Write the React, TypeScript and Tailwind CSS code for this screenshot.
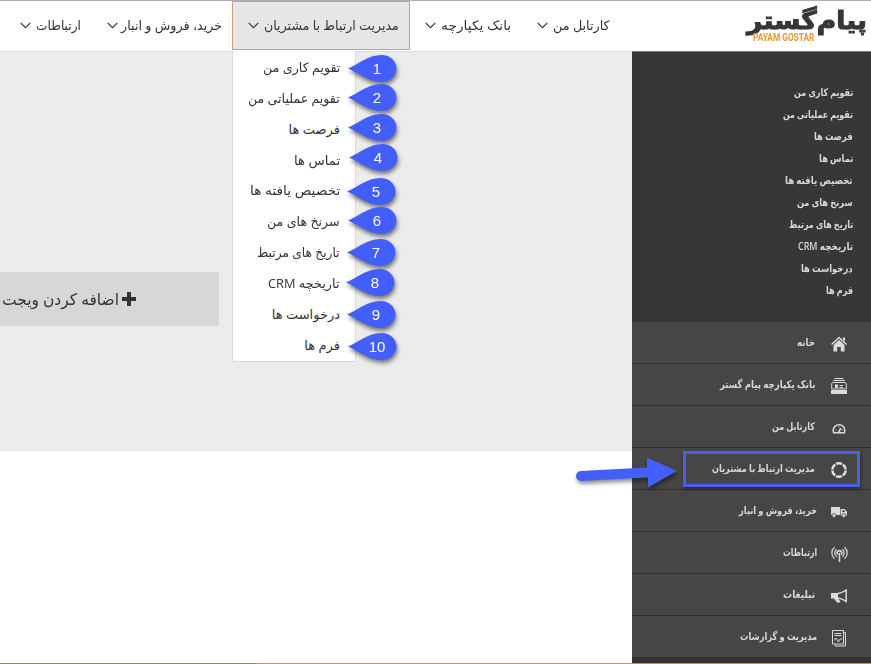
import React, { useLayoutEffect, useRef, useState } from "react";

/* A single line of text whose glyphs are condensed or stretched to the given width. */
function Fit({ w, children, className = "" }: { w: number; children: React.ReactNode; className?: string }) {
  const ref = useRef<HTMLSpanElement>(null);
  const [scale, setScale] = useState(1);
  useLayoutEffect(() => {
    if (ref.current) setScale(w / ref.current.offsetWidth);
  }, [w]);
  return (
    <span dir="rtl" className={"block shrink-0 whitespace-nowrap " + className} style={{ width: w }}>
      <span ref={ref} className="inline-block origin-right" style={{ transform: `scaleX(${scale})` }}>
        {children}
      </span>
    </span>
  );
}

const nav = [
  { label: "کارتابل من", w: 57, box: "gap-[5px] pr-[11px] pl-[15px]" },
  { label: "بانک یکپارچه", w: 70, box: "gap-[5px] pr-[11px] pl-[15px]" },
  {
    label: "مدیریت ارتباط با مشتریان",
    w: 135,
    box: "gap-[5px] border border-[#e09a6c] bg-[#e6e6e6] pr-[10px] pl-[15px]",
  },
  { label: "خرید، فروش و انبار", w: 101, box: "gap-[3px] pr-[10px] pl-[15px]" },
  { label: "ارتباطات", w: 45, box: "gap-[5px] pr-[11px] pl-[15px]" },
];

const entries = [
  { label: "تقویم کاری من", w: 77, sw: 59, x: 348, y: 68 },
  { label: "تقویم عملیاتی من", w: 92, sw: 70, x: 348, y: 97 },
  { label: "فرصت ها", w: 51, sw: 39, x: 348, y: 127.5 },
  { label: "تماس ها", w: 46, sw: 34, x: 349, y: 157.5 },
  { label: "تخصیص یافته ها", w: 90, sw: 68, x: 347, y: 191.5 },
  { label: "سرنخ های من", w: 73, sw: 56, x: 348, y: 220.5 },
  { label: "تاریخ های مرتبط", w: 83, sw: 64, x: 347, y: 252 },
  { label: "تاریخچه CRM", w: 72, sw: 55, x: 346, y: 282 },
  { label: "درخواست ها", w: 68, sw: 52, x: 347, y: 314 },
  { label: "فرم ها", w: 36, sw: 27, x: 348, y: 346 },
];

function HomeIcon() {
  return (
    <svg width="16" height="16" viewBox="0 0 16 16" fill="#d9dbdd">
      <path d="M8 .5 16 8l-1 1L8 2.6 1 9 0 8Z" />
      <path d="M12 1.5h2v4l-2-1.8ZM8 3.8 13.5 9v6.5h-3.700V11H6.200v4.500H2.500V9Z" />
    </svg>
  );
}
function BankIcon() {
  return (
    <svg width="16" height="16" viewBox="0 0 16 16" fill="#d9dbdd">
      <path d="M3.500 0h9v1h-9ZM2.200 2h11.600v1H2.200ZM0 12h16v4H0Z" />
      <path d="M1.500 4.500h13l.8 1.200V11H.7V5.700Z" fill="none" stroke="#d9dbdd" />
      <path d="M4 6.500h3V10H4ZM8.500 7H12v1H8.500ZM8.500 9H12v1H8.500Z" />
    </svg>
  );
}
function GaugeIcon() {
  return (
    <svg width="16" height="16" viewBox="0 0 16 16" fill="none" stroke="#d9dbdd">
      <path d="M2.600 12.700A6 6 0 0 1 2.200 10a5.800 5.200 0 0 1 11.600 0 6 6 0 0 1-.4 2.700Z" strokeWidth="1.500" />
      <path d="m7.600 12 2.300-3.800" strokeWidth="1.700" />
      <path d="M4.200 10h1M8 6.200v1M11 10h1" strokeWidth=".8" />
    </svg>
  );
}
function RingIcon() {
  return (
    <svg width="18" height="18" viewBox="0 0 18 18" fill="none" stroke="#dddfe0">
      <circle cx="9" cy="9" r="6.700" strokeWidth="2.600" pathLength="60" strokeDasharray="8.500 1.500" strokeDashoffset="-.75" />
    </svg>
  );
}
function TruckIcon() {
  return (
    <svg width="16" height="12" viewBox="0 0 16 12" fill="#d9dbdd">
      <path d="M0 1h9v8H0ZM9.600 3h3.600L16 5.600v3.900H9.600Z" />
      <path d="M11.400 4.200h1.500l1.500 1.700h-3Z" fill="#464646" />
      <g stroke="#464646" strokeWidth=".8">
        <circle cx="3" cy="9.500" r="2" />
        <circle cx="12.800" cy="9.500" r="2" />
      </g>
    </svg>
  );
}
function AntennaIcon() {
  return (
    <svg width="17" height="16" viewBox="0 0 17 16" fill="none" stroke="#d9dbdd" strokeWidth="1.200">
      <path d="M3.500 1.200a7.600 7.600 0 0 0 0 11.600M13.500 1.200a7.600 7.600 0 0 1 0 11.600M5.600 3.300a4.700 4.700 0 0 0 0 7.400M11.400 3.300a4.700 4.700 0 0 1 0 7.400" />
      <path d="M6.800 8.600a2.300 2.300 0 1 1 3.400 0M8.500 7v9" strokeWidth="1.500" />
    </svg>
  );
}
function HornIcon() {
  return (
    <svg width="16" height="14" viewBox="0 0 16 14" fill="#d9dbdd">
      <path d="M0 4h7v5.500H0ZM3 9.500h4l2.500 3L7.500 14 5.500 13Z" />
      <path d="M7 4.600c3-.3 5.500-1.800 8.200-3.600v11.500c-2.700-2-5.200-3.300-8.200-3.600" fill="none" stroke="#d9dbdd" strokeWidth="1.500" />
    </svg>
  );
}
function ReportIcon() {
  return (
    <svg width="15" height="17" viewBox="0 0 15 17" fill="none" stroke="#d9dbdd">
      <path d="M.5.5h11v13.500H.5Z" />
      <path d="M12 2.500h1.500V16H3v-1.500" />
      <path d="M2.500 3.500h7M2.500 5.500h7M2 10.500l2-2.500 2.500 4 1.500-3h2" />
    </svg>
  );
}

const side = [
  { label: "خانه", w: 18, inset: 0, icon: <HomeIcon /> },
  { label: "بانک یکپارچه پیام گستر", w: 96, inset: 0, icon: <BankIcon /> },
  { label: "کارتابل من", w: 43, inset: 0, icon: <GaugeIcon /> },
  { label: "مدیریت ارتباط با مشتریان", w: 103, inset: 0, icon: <RingIcon /> },
  { label: "خرید، فروش و انبار", w: 78, inset: 1, icon: <TruckIcon /> },
  { label: "ارتباطات", w: 34, inset: 1, icon: <AntennaIcon /> },
  { label: "تبلیغات", w: 32, inset: 0, icon: <HornIcon /> },
  { label: "مدیریت و گزارشات", w: 77, inset: 1, icon: <ReportIcon /> },
];

function Logo() {
  return (
    <div className="flex h-[44px] w-[124px] flex-col">
      <Fit
        w={120}
        className="mr-[2px] h-[26px] font-['DejaVu_Sans',sans-serif] text-[25px] leading-[31px] font-bold text-[#35363a] [-webkit-text-stroke:1px_#35363a]"
      >
        پیام‌گستر
      </Fit>
      <div className="mr-[55px]">
        <Fit w={61} className="h-[13px] font-['Roboto',sans-serif] text-[11px] leading-[13px] font-bold text-[#e8982f]">
          PAYAM GOSTAR
        </Fit>
      </div>
    </div>
  );
}

function Chevron() {
  return (
    <svg width="11" height="7" viewBox="0 0 11 7" fill="none" stroke="#3c3c3c" strokeWidth="1.300" className="shrink-0">
      <path d="m.7.900 4.800 4.800L10.300.9" />
    </svg>
  );
}

function Balloon({ n, x, y }: { n: number; x: number; y: number }) {
  return (
    <div
      className="absolute h-[27px] w-[49px] drop-shadow-[1px_3px_2px_rgba(0,0,0,0.5)]"
      style={{ left: x, top: y - 13.5 }}
    >
      <svg width="49" height="27" viewBox="0 0 49 27" className="absolute">
        <path d="M0 13.500C10 9.500 20 0 33.500 0 42 0 48.500 6 48.500 13.500S42 27 33.500 27C20 27 10 17.500 0 13.500Z" fill="#435ffb" />
      </svg>
      <span className="absolute left-[14px] w-[30px] text-center font-['Liberation_Sans',sans-serif] text-[15px] leading-[27px] text-white">
        {n}
      </span>
    </div>
  );
}

export default function App() {
  return (
    <div className="relative flex h-[664px] w-[871px] flex-col overflow-hidden bg-white font-['Open_Sans','DejaVu_Sans',sans-serif] text-[#333]">
      <header dir="rtl" className="flex h-[51px] shrink-0 border-t border-[#b0adab] bg-white">
        <div className="w-[250px] pt-[4px] pr-[2px]">
          <Logo />
        </div>
        <nav className="flex">
          {nav.map((n) => (
            <div key={n.label} className={"flex h-[49px] items-center " + n.box}>
              <Fit w={n.w} className="text-[13px]">
                {n.label}
              </Fit>
              <Chevron />
            </div>
          ))}
        </nav>
      </header>

      <div dir="rtl" className="flex min-h-0 flex-1">
        <aside className="flex w-[239px] shrink-0 flex-col bg-[#333] font-semibold text-[#d8d8d8]">
          <div className="h-[271px] shrink-0 border-t border-[#777] bg-[#373737] pt-[29px] pr-[18px]">
            {entries.map((e) => (
              <Fit key={e.label} w={e.sw} className="h-[22px] text-[10.500px] leading-[22px]">
                {e.label}
              </Fit>
            ))}
          </div>
          {side.map((s) => (
            <div key={s.label} className="flex h-[42px] shrink-0 items-center border-b border-[#303030] bg-[#464646] pr-[22px]">
              <span className="flex w-5 justify-center pt-[3px]">{s.icon}</span>
              <span className={s.inset ? "pr-[12px]" : "pr-[14px]"}>
                <Fit w={s.w} className="text-[10.500px]">
                  {s.label}
                </Fit>
              </span>
            </div>
          ))}
        </aside>
        <main dir="ltr" className="flex-1">
          <div className="h-[400px] border-t border-[#ddd] bg-[#ececec] pt-[220px]">
            <div dir="rtl" className="flex h-[54px] w-[219px] items-center gap-[3px] bg-[#d8d6d6] pr-[83px]">
              <svg width="14" height="14" viewBox="0 0 14 14" fill="#333">
                <path d="M5 0h4v5h5v4H9v5H5V9H0V5h5Z" />
              </svg>
              <Fit w={117} className="text-base">
                اضافه کردن ویجت
              </Fit>
            </div>
          </div>
        </main>
      </div>

      <div className="absolute top-[51px] left-[232px] h-[311px] w-[124px] border border-t-0 border-[#d9d9d9] bg-white pt-px" dir="rtl">
        {entries.map((e) => (
          <Fit key={e.label} w={e.w} className="mr-[15px] h-[30.850px] text-[13px] leading-[30.850px]">
            {e.label}
          </Fit>
        ))}
      </div>
      {entries.map((e, i) => (
        <Balloon key={e.label} n={i + 1} x={e.x} y={e.y} />
      ))}

      <div className="absolute top-[451px] left-[683px] h-9 w-[177px] border-3 border-[#4860e6] shadow-[1px_2px_3px_rgba(0,0,0,0.4)]" />
      <svg
        width="110"
        height="40"
        viewBox="0 0 110 40"
        className="absolute top-[452px] left-[572px] drop-shadow-[1px_3px_2px_rgba(0,0,0,0.45)]"
        fill="#435ffb"
      >
        <path d="M9 19 75 15.500V5.500L105 19 76 35.500V25.500L9 29A5 5 0 0 1 9 19Z" />
      </svg>
      <div className="absolute bottom-0 left-0 flex h-px w-full">
        <div className="w-[257px] bg-[#7d8f45]" />
        <div className="flex-1 bg-[#b39a66]" />
      </div>
    </div>
  );
}
